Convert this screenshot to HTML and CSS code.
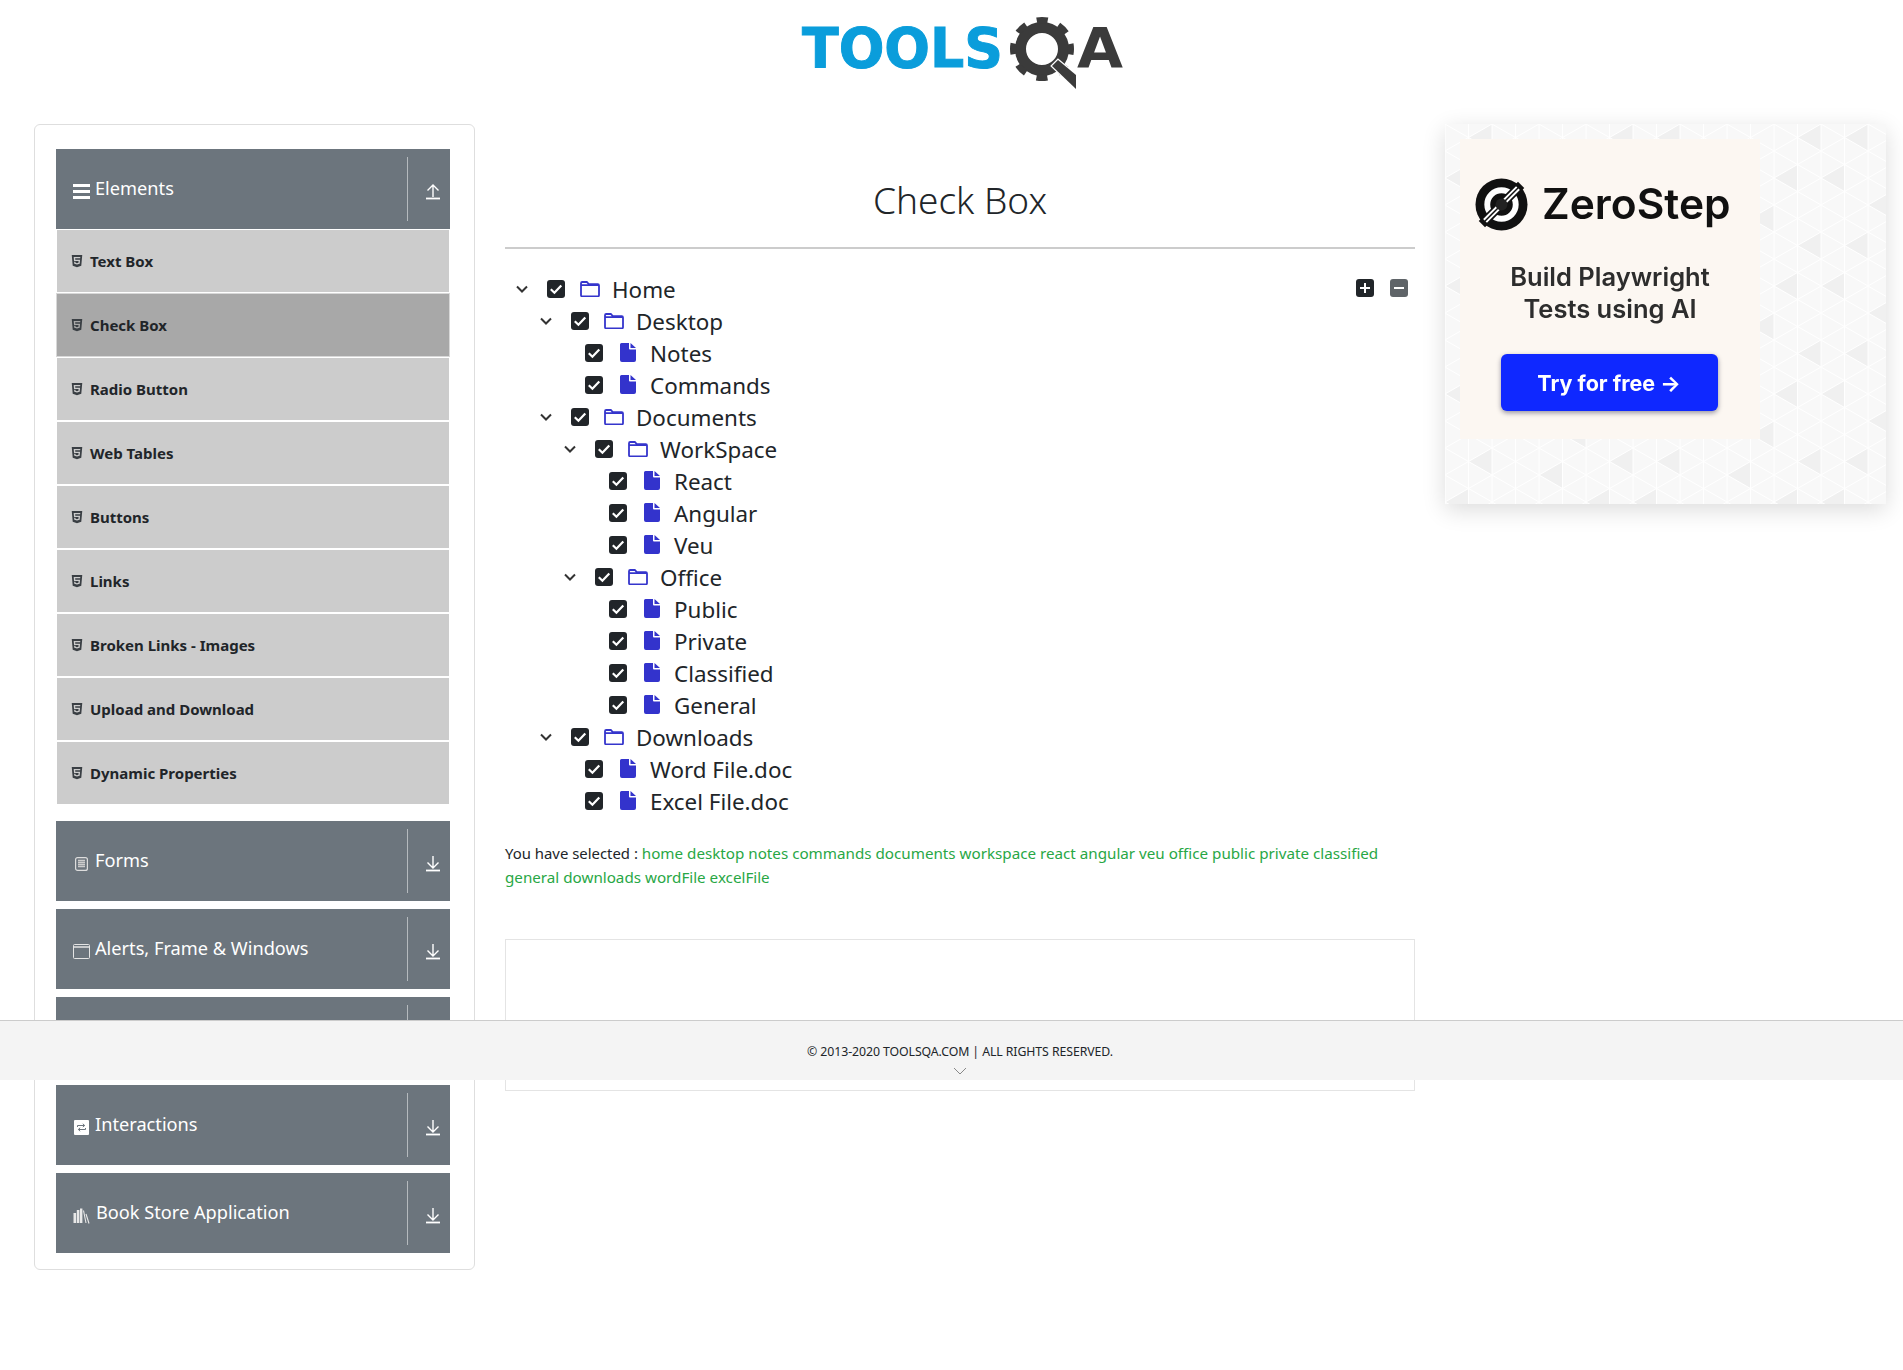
FILE: index.html
```html
<!DOCTYPE html>
<html lang="en">
<head>
<meta charset="utf-8">
<title>ToolsQA - Check Box</title>
<link rel="stylesheet" href="styles.css">
</head>
<body>
<svg class="sprites" xmlns="http://www.w3.org/2000/svg">
  <symbol id="i-html5" viewBox="0 0 384 512"><path d="M0 32l34.900 395.800L191.500 480l157.600-52.200L384 32H0zm308.200 127.900H124.400l4.100 49.400h175.600l-13.600 148.400-97.900 27v.3h-1.100l-98.700-27.300-6-75.800h47.700L138 320l53.500 14.500 53.700-14.500 6-62.200H84.300L71.500 112.200h241.100l-4.400 47.700z"/></symbol>
  <symbol id="i-up" viewBox="0 0 16 17"><path d="M8 14V2M2.500 7.500 8 2l5.500 5.500" fill="none" stroke="#fff" stroke-width="1.400"/><path d="M1 15.500h14" stroke="#fff" stroke-width="1.800"/></symbol>
  <symbol id="i-down" viewBox="0 0 16 17"><path d="M8 1v12M2.500 7.500 8 13l5.500-5.500" fill="none" stroke="#fff" stroke-width="1.400"/><path d="M1 15.500h14" stroke="#fff" stroke-width="1.800"/></symbol>
  <symbol id="i-chev" viewBox="0 0 14 14"><path d="M2 4.500 7 9.500l5-5" fill="none" stroke="#333" stroke-width="2"/></symbol>
  <symbol id="i-check" viewBox="0 0 18 18"><rect width="18" height="18" rx="3" fill="#212529"/><path d="M3.800 9.300 7.400 12.800 14.300 5.400" fill="none" stroke="#fff" stroke-width="2.200"/></symbol>
  <symbol id="i-folder" viewBox="0 0 20 16"><path d="M1 14.200V2.200q0-1.200 1.200-1.200h4.600l2 2.200h9q1.200 0 1.200 1.200v9.800q0 1.200-1.200 1.200H2.200Q1 15.400 1 14.200ZM1 4.200h18" fill="none" stroke="#3535cc" stroke-width="1.800"/></symbol>
  <symbol id="i-file" viewBox="0 0 16 19"><path d="M1.500 0H9v5.500q0 1 1 1h6V17q0 2-2 2H2q-2 0-2-2V1.500Q0 0 1.500 0ZM10.500 0 16 5h-5.500Z" fill="#3333cc"/></symbol>
</svg>

<header class="brand">
  <svg class="logo" viewBox="0 0 330 100" role="img" aria-label="ToolsQA">
    <text class="logo-tools" x="2" y="67" textLength="201" lengthAdjust="spacingAndGlyphs">TOOLS</text>
    <circle cx="242" cy="49" r="21.500" fill="none" stroke="#3b3b3b" stroke-width="11"/>
    <circle cx="242" cy="49" r="29" fill="none" stroke="#3b3b3b" stroke-width="6" stroke-dasharray="11 11.780" stroke-dashoffset="5.500"/>
    <polygon points="258,60 276,75 276,89 252,66" fill="#3b3b3b" stroke="#fff" stroke-width="2.500" paint-order="stroke"/>
    <text class="logo-a" x="277" y="67" textLength="46" lengthAdjust="spacingAndGlyphs">A</text>
  </svg>
</header>

<main class="layout">
  <aside class="menu-card">
    <section class="group">
      <div class="group-head">
        <span class="hicon"><svg width="17" height="15" viewBox="0 0 17 15"><path d="M0 1.500h17M0 7.500h17M0 13.500h17" stroke="#fff" stroke-width="3"/></svg></span>
        <span class="group-title">Elements</span>
        <span class="harrow"><svg width="16" height="17"><use href="#i-up"/></svg></span>
      </div>
      <ul class="items">
        <li class="item"><svg class="h5" width="12" height="14"><use href="#i-html5"/></svg>Text Box</li>
        <li class="item active"><svg class="h5" width="12" height="14"><use href="#i-html5"/></svg>Check Box</li>
        <li class="item"><svg class="h5" width="12" height="14"><use href="#i-html5"/></svg>Radio Button</li>
        <li class="item"><svg class="h5" width="12" height="14"><use href="#i-html5"/></svg>Web Tables</li>
        <li class="item"><svg class="h5" width="12" height="14"><use href="#i-html5"/></svg>Buttons</li>
        <li class="item"><svg class="h5" width="12" height="14"><use href="#i-html5"/></svg>Links</li>
        <li class="item"><svg class="h5" width="12" height="14"><use href="#i-html5"/></svg>Broken Links - Images</li>
        <li class="item"><svg class="h5" width="12" height="14"><use href="#i-html5"/></svg>Upload and Download</li>
        <li class="item"><svg class="h5" width="12" height="14"><use href="#i-html5"/></svg>Dynamic Properties</li>
      </ul>
    </section>
    <section class="group">
      <div class="group-head">
        <span class="hicon"><svg width="13" height="14" viewBox="0 0 13 14"><rect x=".6" y=".6" width="11.800" height="12.800" rx="2" fill="none" stroke="#ddd" stroke-width="1.200"/><path d="M3 3.500h7M3 5.500h7M3 7.500h7M3 9.500h7" stroke="#ccc" stroke-width="1.300"/></svg></span>
        <span class="group-title">Forms</span>
        <span class="harrow"><svg width="16" height="17"><use href="#i-down"/></svg></span>
      </div>
    </section>
    <section class="group">
      <div class="group-head">
        <span class="hicon"><svg width="17" height="15" viewBox="0 0 17 15"><rect x=".5" y=".5" width="16" height="14" rx="1" fill="none" stroke="#e4e4e4"/><path d="M0 3h17" stroke="#e4e4e4" stroke-width="1.500"/></svg></span>
        <span class="group-title">Alerts, Frame &amp; Windows</span>
        <span class="harrow"><svg width="16" height="17"><use href="#i-down"/></svg></span>
      </div>
    </section>
    <section class="group">
      <div class="group-head">
        <span class="hicon"></span>
        <span class="group-title">Widgets</span>
        <span class="harrow"><svg width="16" height="17"><use href="#i-down"/></svg></span>
      </div>
    </section>
    <section class="group">
      <div class="group-head">
        <span class="hicon"><svg width="15" height="15" viewBox="0 0 15 15"><rect width="15" height="15" rx="1" fill="#fff"/><path d="M3.500 7V5.500h7M8.800 3.800l1.900 1.700L8.800 7M11.500 8v1.500h-7M6.200 7.800 4.300 9.500l1.900 1.700" fill="none" stroke="#6c757d" stroke-width="1"/></svg></span>
        <span class="group-title">Interactions</span>
        <span class="harrow"><svg width="16" height="17"><use href="#i-down"/></svg></span>
      </div>
    </section>
    <section class="group">
      <div class="group-head">
        <span class="hicon"><svg width="18" height="16" viewBox="0 0 18 16"><path d="M.5 5h2.600v10H.5zM3.800 2h2.600v13H3.800zM7 .5h2.400v14.500H7z" fill="#e8e8e8"/><path d="M10.500 2.500 13 15M13 6l3 9.500" stroke="#e8e8e8" stroke-width="1.100"/></svg></span>
        <span class="group-title">Book Store Application</span>
        <span class="harrow"><svg width="16" height="17"><use href="#i-down"/></svg></span>
      </div>
    </section>
  </aside>

  <section class="content">
    <h1 class="page-title">Check Box</h1>
    <div class="tree-wrap">
      <ol class="tree">
        <li><div class="node"><span class="toggle"><svg width="14" height="14"><use href="#i-chev"/></svg></span><svg class="cb" width="18" height="18"><use href="#i-check"/></svg><svg class="kind" width="20" height="16"><use href="#i-folder"/></svg><span class="label">Home</span></div>
          <ol class="tree">
            <li><div class="node"><span class="toggle"><svg width="14" height="14"><use href="#i-chev"/></svg></span><svg class="cb" width="18" height="18"><use href="#i-check"/></svg><svg class="kind" width="20" height="16"><use href="#i-folder"/></svg><span class="label">Desktop</span></div>
              <ol class="tree">
                <li><div class="node leaf"><svg class="cb" width="18" height="18"><use href="#i-check"/></svg><svg class="kind" width="16" height="19"><use href="#i-file"/></svg><span class="label">Notes</span></div></li>
                <li><div class="node leaf"><svg class="cb" width="18" height="18"><use href="#i-check"/></svg><svg class="kind" width="16" height="19"><use href="#i-file"/></svg><span class="label">Commands</span></div></li>
              </ol>
            </li>
            <li><div class="node"><span class="toggle"><svg width="14" height="14"><use href="#i-chev"/></svg></span><svg class="cb" width="18" height="18"><use href="#i-check"/></svg><svg class="kind" width="20" height="16"><use href="#i-folder"/></svg><span class="label">Documents</span></div>
              <ol class="tree">
                <li><div class="node"><span class="toggle"><svg width="14" height="14"><use href="#i-chev"/></svg></span><svg class="cb" width="18" height="18"><use href="#i-check"/></svg><svg class="kind" width="20" height="16"><use href="#i-folder"/></svg><span class="label">WorkSpace</span></div>
                  <ol class="tree">
                    <li><div class="node leaf"><svg class="cb" width="18" height="18"><use href="#i-check"/></svg><svg class="kind" width="16" height="19"><use href="#i-file"/></svg><span class="label">React</span></div></li>
                    <li><div class="node leaf"><svg class="cb" width="18" height="18"><use href="#i-check"/></svg><svg class="kind" width="16" height="19"><use href="#i-file"/></svg><span class="label">Angular</span></div></li>
                    <li><div class="node leaf"><svg class="cb" width="18" height="18"><use href="#i-check"/></svg><svg class="kind" width="16" height="19"><use href="#i-file"/></svg><span class="label">Veu</span></div></li>
                  </ol>
                </li>
                <li><div class="node"><span class="toggle"><svg width="14" height="14"><use href="#i-chev"/></svg></span><svg class="cb" width="18" height="18"><use href="#i-check"/></svg><svg class="kind" width="20" height="16"><use href="#i-folder"/></svg><span class="label">Office</span></div>
                  <ol class="tree">
                    <li><div class="node leaf"><svg class="cb" width="18" height="18"><use href="#i-check"/></svg><svg class="kind" width="16" height="19"><use href="#i-file"/></svg><span class="label">Public</span></div></li>
                    <li><div class="node leaf"><svg class="cb" width="18" height="18"><use href="#i-check"/></svg><svg class="kind" width="16" height="19"><use href="#i-file"/></svg><span class="label">Private</span></div></li>
                    <li><div class="node leaf"><svg class="cb" width="18" height="18"><use href="#i-check"/></svg><svg class="kind" width="16" height="19"><use href="#i-file"/></svg><span class="label">Classified</span></div></li>
                    <li><div class="node leaf"><svg class="cb" width="18" height="18"><use href="#i-check"/></svg><svg class="kind" width="16" height="19"><use href="#i-file"/></svg><span class="label">General</span></div></li>
                  </ol>
                </li>
              </ol>
            </li>
            <li><div class="node"><span class="toggle"><svg width="14" height="14"><use href="#i-chev"/></svg></span><svg class="cb" width="18" height="18"><use href="#i-check"/></svg><svg class="kind" width="20" height="16"><use href="#i-folder"/></svg><span class="label">Downloads</span></div>
              <ol class="tree">
                <li><div class="node leaf"><svg class="cb" width="18" height="18"><use href="#i-check"/></svg><svg class="kind" width="16" height="19"><use href="#i-file"/></svg><span class="label">Word File.doc</span></div></li>
                <li><div class="node leaf"><svg class="cb" width="18" height="18"><use href="#i-check"/></svg><svg class="kind" width="16" height="19"><use href="#i-file"/></svg><span class="label">Excel File.doc</span></div></li>
              </ol>
            </li>
          </ol>
        </li>
      </ol>
      <div class="tree-actions">
        <button class="tree-btn" type="button" aria-label="Expand all"><svg width="10" height="10" viewBox="0 0 10 10"><path d="M5 0v10M0 5h10" stroke="#fff" stroke-width="2"/></svg></button>
        <button class="tree-btn muted" type="button" aria-label="Collapse all"><svg width="10" height="10" viewBox="0 0 10 10"><path d="M0 5h10" stroke="#fff" stroke-width="2"/></svg></button>
      </div>
    </div>
    <p class="result">You have selected : <span class="ok">home desktop notes commands documents workspace react angular veu office public private classified<br>general downloads wordFile excelFile</span></p>
    <div class="empty-box"></div>
  </section>

  <aside class="ad">
    <svg class="ad-bg" width="441" height="380">
      <defs>
        <pattern id="shade" width="188" height="108" patternUnits="userSpaceOnUse">
          <path d="M23.500 13.500 47 27V0ZM94 27l23.500 13.500V13.500ZM141 54l23.500 13.500V40.500ZM47 81l23.500 13.500V67.500ZM0 54l23.500-13.500V67.500ZM117.500 94.500 141 81v27ZM164.500 13.500 188 0v27Z" fill="#f0f0f0"/>
        </pattern>
        <pattern id="lines" width="47" height="27" patternUnits="userSpaceOnUse">
          <path d="M0 0v27M23.500 0v27M47 0v27M0 0l47 27M0 27 47 0" stroke="#fff" stroke-width="1" fill="none"/>
        </pattern>
      </defs>
      <rect width="441" height="380" fill="#f8f8f8"/>
      <rect width="441" height="380" fill="url(#shade)"/>
      <rect width="441" height="380" fill="url(#lines)"/>
    </svg>
    <div class="ad-card">
      <div class="zs-brand">
        <svg width="53" height="53" viewBox="-27 -27 54 54"><circle r="26.500" fill="#111"/><circle r="14.500" fill="none" stroke="#fff" stroke-width="6"/><path d="M-20 20 20-20" stroke="#111" stroke-width="9"/><path d="M-18 15.500 15.500-18M-15.500 18 18-15.500" stroke="#fff" stroke-width="2"/><circle r="6" fill="#222"/></svg>
        <span class="zs-name">ZeroStep</span>
      </div>
      <p class="zs-copy">Build Playwright<br>Tests using AI</p>
      <div class="zs-btn">Try for free →</div>
    </div>
  </aside>
</main>

<footer class="site-footer">
  <div class="copyright">© 2013-2020 TOOLSQA.COM | ALL RIGHTS RESERVED.</div>
  <svg class="foot-chev" width="14" height="8" viewBox="0 0 14 8"><path d="M1 1l6 6 6-6" fill="none" stroke="#888" stroke-width="1"/></svg>
</footer>
</body>
</html>
```
FILE: styles.css
```css
* { box-sizing: border-box; }
html, body { margin: 0; padding: 0; }
body {
  position: relative;
  min-height: 1370px;
  background: #fff;
  color: #212529;
  font-family: "Noto Sans", "Open Sans", sans-serif;
}
.sprites { display: none; }

.brand { height: 124px; display: flex; justify-content: center; }
.logo { width: 330px; height: 100px; margin-left: 27px; }
.logo-tools { font: 700 56px "DejaVu Sans", sans-serif; fill: #0a9ddb; stroke: #0a9ddb; stroke-width: 1px; }
.logo-a { font: 700 56px "DejaVu Sans", sans-serif; fill: #3b3b3b; }

.layout { display: flex; align-items: flex-start; gap: 30px; padding: 0 17px 0 34px; }

.menu-card {
  flex: 0 0 441px;
  height: 1146px;
  padding: 24px 24px 0 21px;
  border: 1px solid #dedede;
  border-radius: 6px;
  background: #fff;
}
.group { margin-bottom: 8px; }
.group:first-child { margin-bottom: 16px; }
.group-head {
  height: 80px;
  display: flex;
  align-items: center;
  padding-left: 17px;
  background: #6c757d;
  color: #fff;
}
.hicon { flex: 0 0 17px; height: 16px; margin: 5px 5px 0 0; display: flex; align-items: center; justify-content: center; }
.group-title { flex: 1; font-size: 18.200px; line-height: 24px; padding-bottom: 2px; }
.harrow {
  flex: 0 0 43px;
  align-self: stretch;
  margin: 8px 0;
  border-left: 1px solid #b5babe;
  display: flex;
  align-items: center;
  justify-content: center;
  padding: 4px 0 0 7px;
}
.items { list-style: none; margin: 0; padding: 0; }
.item {
  height: 64px;
  display: flex;
  align-items: center;
  padding-left: 14px;
  background: #ccc;
  border: 1px solid #fff;
  font-size: 15px;
  font-weight: 700;
  color: #212529;
}
.item.active { background: #a8a8a8; border-color: #d8d8d8; }
.h5 { margin-right: 7px; fill: #3a3f44; }

.content { flex: 0 0 910px; }
.page-title {
  margin: 0;
  height: 125px;
  padding-top: 48px;
  border-bottom: 2px solid #ccc;
  font-size: 37px;
  line-height: 56px;
  font-weight: 300;
  text-align: center;
  color: #212529;
}
.tree-wrap { display: flex; justify-content: space-between; padding-top: 25px; }
.tree { list-style: none; margin: 0; padding: 0 0 0 24px; }
.tree-wrap > .tree { padding-left: 5px; }
.node { height: 32px; display: flex; align-items: center; }
.toggle { flex: 0 0 37px; padding-left: 5px; display: flex; align-items: center; height: 14px; margin-top: -3px; }
.leaf { padding-left: 27px; }
.cb { flex: none; margin-top: -3px; }
.kind { flex: none; margin: -3px 12px 0 15px; }
.leaf .kind { margin-left: 17px; margin-right: 14px; }
.label { font-size: 22.400px; line-height: 32px; color: #212529; white-space: nowrap; }
.tree-actions { display: flex; gap: 16px; padding: 5px 7px 0 0; }
.tree-btn {
  width: 18px;
  height: 18px;
  padding: 0;
  border: 0;
  border-radius: 3px;
  background: #212529;
  display: flex;
  align-items: center;
  justify-content: center;
}
.tree-btn.muted { background: #5f6468; }

.result { margin: 23px 0 0; font-size: 14.900px; line-height: 24px; color: #212529; }
.ok { font-size: 15.200px; color: #28a745; }
.empty-box { height: 152px; margin-top: 50px; border: 1px solid #e4e4e4; }

.ad {
  position: relative;
  flex: 0 0 441px;
  height: 380px;
  padding: 15px;
  box-shadow: 0 6px 22px rgba(0, 0, 0, .14);
}
.ad-bg { position: absolute; left: 0; top: 0; }
.ad-card {
  position: relative;
  width: 300px;
  height: 300px;
  padding-top: 38px;
  background: #fcf7f2;
  display: flex;
  flex-direction: column;
  align-items: center;
  font-family: Inter, "Noto Sans", sans-serif;
  filter: blur(.4px);
}
.zs-brand { align-self: flex-start; display: flex; align-items: center; gap: 14px; height: 54px; padding-left: 15px; }
.zs-name { font-size: 42.500px; font-weight: 600; color: #111; line-height: 54px; white-space: nowrap; }
.zs-copy { margin: 30px 0 0; font-size: 25.500px; line-height: 32px; font-weight: 600; color: #2d2d2d; text-align: center; }
.zs-btn {
  width: 217px;
  height: 57px;
  margin: 29px 2px 0 0;
  border-radius: 6px;
  background: #0f28ff;
  box-shadow: 0 2px 5px rgba(0, 0, 40, .4);
  color: #fff;
  font-size: 21.500px;
  font-weight: 700;
  display: flex;
  align-items: center;
  justify-content: center;
}

.site-footer {
  position: absolute;
  left: 0;
  right: 0;
  top: 1020px;
  height: 60px;
  padding-left: 17px;
  background: #f4f4f4;
  border-top: 1px solid #ccc;
  text-align: center;
}
.copyright { padding-top: 22px; font-size: 12.300px; line-height: 18px; letter-spacing: -.08px; color: #212529; }
.foot-chev { display: block; margin: 6px auto 0; }
```
